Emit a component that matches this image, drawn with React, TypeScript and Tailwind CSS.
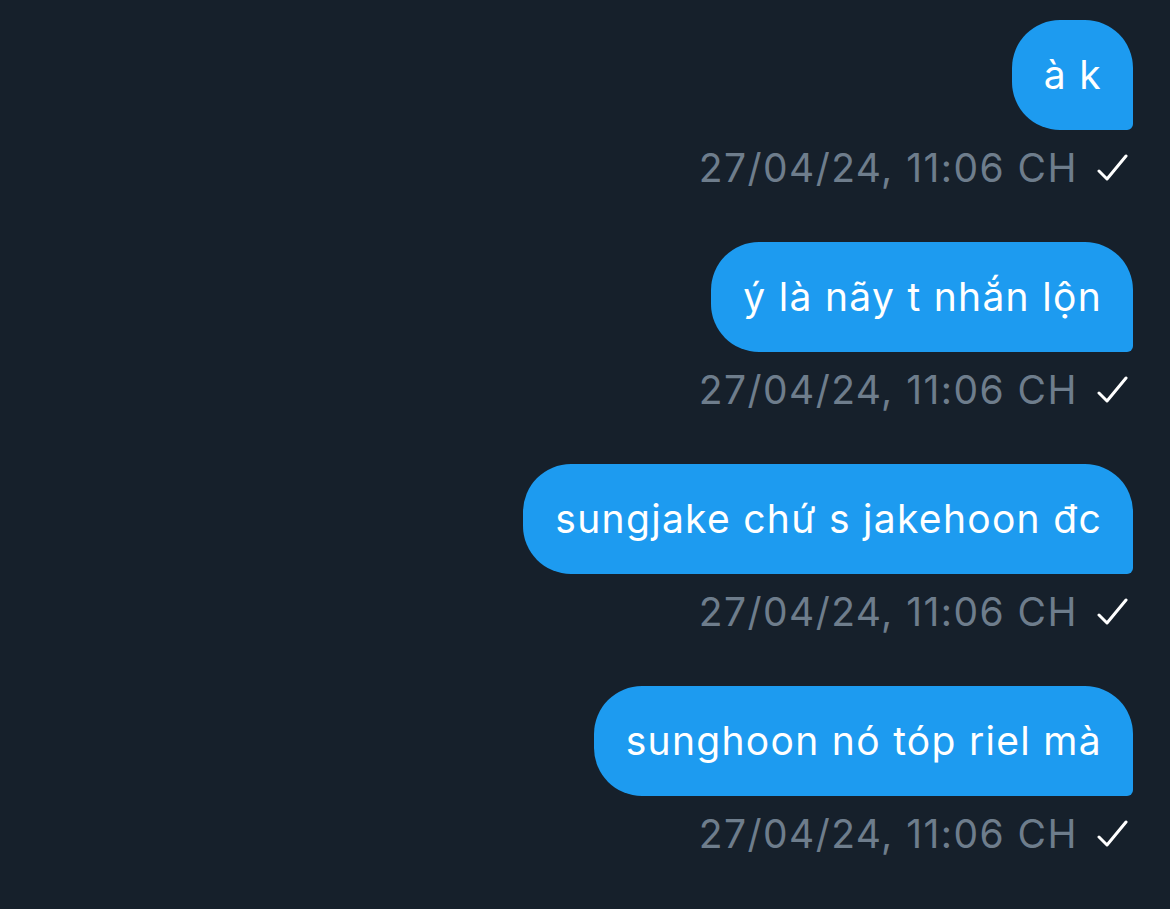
import React from 'react';

const messages = [
  'à k',
  'ý là nãy t nhắn lộn',
  'sungjake chứ s jakehoon đc',
  'sunghoon nó tóp riel mà',
];

function Check() {
  return (
    <svg className="w-[32px] h-[32px]" viewBox="0 0 32 32" fill="none" stroke="#ffffff" strokeWidth={3} strokeLinecap="round" strokeLinejoin="round">
      <path d="M3 19l8 8L30 4" />
    </svg>
  );
}

export default function App() {
  return (
    <div className="w-[1170px] h-[909px] bg-[#16202b] overflow-hidden flex flex-col items-end pr-[37px] pt-[20px] font-['Inter','Noto_Sans',sans-serif]">
      {messages.map((m) => (
        <div key={m} className="flex flex-col items-end mb-[49px]">
          <div className="bg-[#1d9bf0] text-white text-[39px] tracking-[1.3px] leading-[50px] pl-[32px] pr-[31px] py-[30px] rounded-[48px] rounded-br-[6px] whitespace-nowrap">
            {m}
          </div>
          <div className="flex items-center mt-[13px] h-[50px] gap-[18px] pr-[5px]">
            <span className="text-[39px] tracking-[1.45px] leading-[50px] text-[#6e7d8c]">27/04/24, 11:06 CH</span>
            <Check />
          </div>
        </div>
      ))}
    </div>
  );
}
